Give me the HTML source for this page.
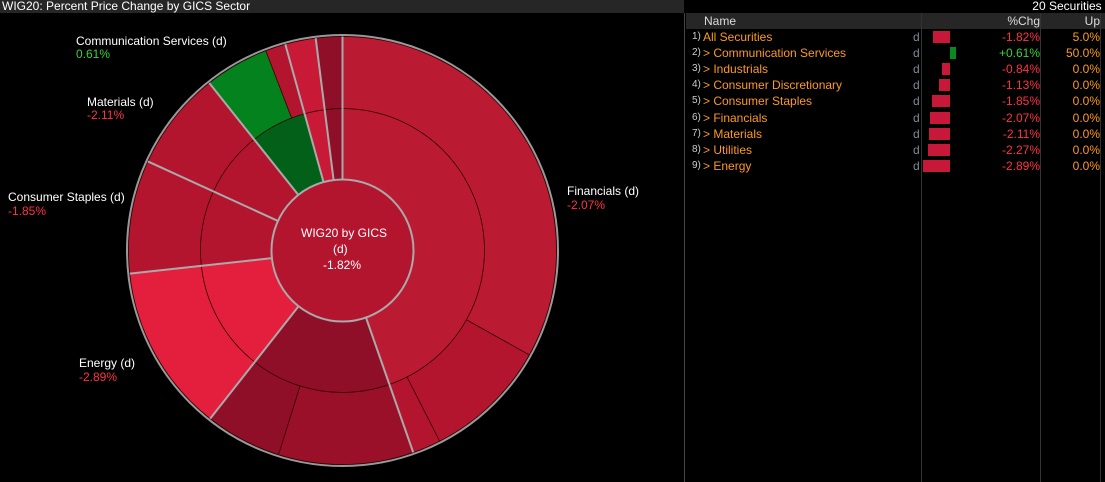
<!DOCTYPE html>
<html><head><meta charset="utf-8"><style>
body{margin:0;width:1105px;height:482px;background:#000;overflow:hidden;font-family:"Liberation Sans",sans-serif;font-size:12px;color:#fff;position:relative}
.t{position:absolute;white-space:nowrap;line-height:14px}
#title{position:absolute;left:0;top:0;width:684px;height:13px;background:#262626;font-size:12px;line-height:12px;padding-left:2px}
#sec{position:absolute;left:684px;top:0;width:421px;height:13px;background:#000;text-align:right;line-height:12px}
#panel{position:absolute;left:684px;top:13px;width:421px;height:469px;border-left:1px solid #444}
.hdr{position:absolute;left:1px;top:0;width:420px;height:16px;background:#262626}
.row{position:absolute;left:0;height:16px;width:421px;color:#f5a623;}
.o{color:#ff9a1f}
.r{color:#ff3344}.g{color:#3bd13b}
.bar{position:absolute;height:12px;top:2px}
</style></head><body>
<div id="title">WIG20: Percent Price Change by GICS Sector</div>
<div id="sec">20 Securities&nbsp;</div>
<svg id="ch" width="684" height="482" style="position:absolute;left:0;top:0"></svg>
<div class="t" style="left:76px;top:34px">Communication Services (d)</div>
<div class="t g" style="left:76px;top:47px">0.61%</div>
<div class="t" style="left:87px;top:95px">Materials (d)</div>
<div class="t r" style="left:87px;top:108px">-2.11%</div>
<div class="t" style="left:8px;top:190px">Consumer Staples (d)</div>
<div class="t r" style="left:8px;top:204px">-1.85%</div>
<div class="t" style="left:79px;top:356px">Energy (d)</div>
<div class="t r" style="left:79px;top:370px">-2.89%</div>
<div class="t" style="left:567px;top:184px">Financials (d)</div>
<div class="t r" style="left:567px;top:198px">-2.07%</div>
<div class="t" style="left:301px;top:226px">WIG20 by GICS</div>
<div class="t" style="left:333px;top:242px">(d)</div>
<div class="t" style="left:323px;top:258px">-1.82%</div>
<div id="panel">
<div class="hdr"></div>
<div style="position:absolute;left:236px;top:0;width:1px;height:469px;background:#333"></div>
<div style="position:absolute;left:355px;top:0;width:1px;height:469px;background:#333"></div>
<div style="position:absolute;left:415px;top:0;width:1px;height:469px;background:#333"></div>
<div class="t" style="left:19px;top:1px;color:#ddd">Name</div>
<div class="t" style="right:66px;top:1px;color:#ddd">%Chg</div>
<div class="t" style="right:6px;top:1px;color:#ddd">Up</div>
<div id="rows"></div>
</div>
<script>
var ns="http://www.w3.org/2000/svg",svg=document.getElementById('ch');
var cx=342.5,cy=250.5;
function P(a,r){a=a*Math.PI/180;return [cx+r*Math.sin(a),cy-r*Math.cos(a)];}
function seg(a0,a1,r0,r1,fill,stroke,sw){
var p1=P(a0,r1),p2=P(a1,r1),p3=P(a1,r0),p4=P(a0,r0),lg=(a1-a0)>180?1:0;
var d="M"+p1+"A"+r1+","+r1+" 0 "+lg+" 1 "+p2+"L"+p3+"A"+r0+","+r0+" 0 "+lg+" 0 "+p4+"Z";
var e=document.createElementNS(ns,'path');e.setAttribute('d',d);e.setAttribute('fill',fill);
e.setAttribute('stroke',stroke||'#300');e.setAttribute('stroke-width',sw||0.7);svg.appendChild(e);}
var R0=71,R1=142,R2=214;
var C1='#bb1a33',C2='#b3152f',D='#8f0e28',D2='#9a1029',E='#e31f3d',G='#03821e',G2='#036018',C3='#c81a37';
[[0,160.7,C1],[160.7,218.2,D],[218.2,263.8,E],[263.8,294.6,C2],[294.6,321.5,C2],[321.5,344.5,G2],[344.5,352.8,C3],[352.8,360,D]].forEach(s=>seg(s[0],s[1],R0,R1,s[2]));
[[0,119.2,C1],[119.2,153,C2],[153,160.7,C2],[160.7,197.4,D2],[197.4,218.2,D],[218.2,263.8,E],[263.8,294.6,C2],[294.6,321.5,C2],[321.5,339,G],[339,344.5,C2],[344.5,352.8,C3],[352.8,360,D]].forEach(s=>seg(s[0],s[1],R1,R2,s[2]));
var c=document.createElementNS(ns,'circle');c.setAttribute('cx',cx);c.setAttribute('cy',cy);c.setAttribute('r',R0);c.setAttribute('fill','#b3152f');c.setAttribute('stroke','#aaa');c.setAttribute('stroke-width',2);svg.appendChild(c);
var o=document.createElementNS(ns,'circle');o.setAttribute('cx',cx);o.setAttribute('cy',cy);o.setAttribute('r',R2+1.5);o.setAttribute('fill','none');o.setAttribute('stroke','#999');o.setAttribute('stroke-width',2);svg.appendChild(o);
[0,160.7,218.2,263.8,294.6,321.5,344.5,352.8].forEach(a=>{var p=P(a,R0),q=P(a,R2);var l=document.createElementNS(ns,'line');l.setAttribute('x1',p[0]);l.setAttribute('y1',p[1]);l.setAttribute('x2',q[0]);l.setAttribute('y2',q[1]);l.setAttribute('stroke','#aaa');l.setAttribute('stroke-width',2);svg.appendChild(l);});
var rows=[["1)","All Securities","-1.82%","5.0%",17,0],["2)","&gt; Communication Services","+0.61%","50.0%",6,1],["3)","&gt; Industrials","-0.84%","0.0%",8,0],["4)","&gt; Consumer Discretionary","-1.13%","0.0%",11,0],["5)","&gt; Consumer Staples","-1.85%","0.0%",18,0],["6)","&gt; Financials","-2.07%","0.0%",20,0],["7)","&gt; Materials","-2.11%","0.0%",21,0],["8)","&gt; Utilities","-2.27%","0.0%",22,0],["9)","&gt; Energy","-2.89%","0.0%",27,0]];
var h="";rows.forEach((r,i)=>{var top=16+i*16.1;
h+='<div class="row" style="top:'+top+'px"><span class="t" style="left:7px;font-size:10px;color:#ccc;top:1px">'+r[0]+'</span><span class="t o" style="left:18px;top:1px">'+r[1]+'</span><span class="t" style="left:228px;color:#7a8a9a;top:1px">d</span>'+
(r[5]?'<div class="bar" style="left:265px;width:6px;background:#0a8a1e"></div>':'<div class="bar" style="left:'+(265-r[4])+'px;width:'+r[4]+'px;background:#c8183a"></div>')+
'<span class="t '+(r[5]?'g':'r')+'" style="right:66px;top:1px">'+r[2]+'</span><span class="t o" style="right:6px;top:1px">'+r[3]+'</span></div>';});
document.getElementById('rows').innerHTML=h;
</script>
</body></html>
